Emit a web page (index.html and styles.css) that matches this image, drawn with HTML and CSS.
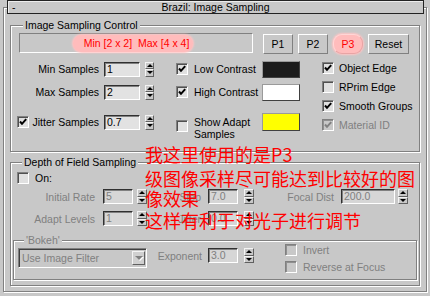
FILE: index.html
```html
<!DOCTYPE html>
<html lang="zh-CN">

<head>
  <meta charset="UTF-8">
  <title>Brazil: Image Sampling</title>
  <link rel="stylesheet" href="styles.css">
</head>

<body>
  <div class="rollout">
    <div class="rollout-title">
      <span class="minus">-</span>
      <span class="title-text">Brazil: Image Sampling</span>
    </div>

    <!-- Image Sampling Control -->
    <div class="group g-sampling">
      <div class="legend">Image Sampling Control</div>
      <div class="top-row">
        <div class="readout"><span class="mark">Min [2 x 2]&nbsp; Max [4 x 4]</span></div>
        <div class="btn b-p1">P1</div>
        <div class="btn b-p2">P2</div>
        <div class="btn b-p3 hot">P3</div>
        <div class="btn b-reset">Reset</div>
      </div>

      <div class="main">
        <div class="left">
          <div class="row">
            <div class="label">Min Samples</div>
            <div class="edit">1</div>
            <div class="spin"><span class="up"></span><span class="dn"></span></div>
            <div class="opt"><span class="cb on"><svg viewBox="0 0 10 10"><path d="M2 4.5 4 6.8 8.2 2.2" /></svg></span><span>Low Contrast</span></div>
            <div class="swatch black"></div>
          </div>
          <div class="row r2">
            <div class="label">Max Samples</div>
            <div class="edit">2</div>
            <div class="spin"><span class="up"></span><span class="dn"></span></div>
            <div class="opt"><span class="cb on"><svg viewBox="0 0 10 10"><path d="M2 4.5 4 6.8 8.2 2.2" /></svg></span><span>High Contrast</span></div>
            <div class="swatch white"></div>
          </div>
          <div class="row r3">
            <div class="label jit"><span class="cb on"><svg viewBox="0 0 10 10"><path d="M2 4.5 4 6.8 8.2 2.2" /></svg></span><span>Jitter Samples</span></div>
            <div class="edit">0.7</div>
            <div class="spin"><span class="up"></span><span class="dn"></span></div>
            <div class="opt tall"><span class="cb"></span><span class="two">Show Adapt<br>Samples</span></div>
            <div class="swatch yellow"></div>
          </div>
        </div>

        <div class="right">
          <div class="ritem"><span class="cb on"><svg viewBox="0 0 10 10"><path d="M2 4.5 4 6.8 8.2 2.2" /></svg></span><span>Object Edge</span></div>
          <div class="ritem"><span class="cb"></span><span>RPrim Edge</span></div>
          <div class="ritem"><span class="cb on"><svg viewBox="0 0 10 10"><path d="M2 4.5 4 6.8 8.2 2.2" /></svg></span><span>Smooth Groups</span></div>
          <div class="ritem off"><span class="cb on"><svg viewBox="0 0 10 10"><path d="M2 4.5 4 6.8 8.2 2.2" /></svg></span><span>Material ID</span></div>
        </div>
      </div>
    </div>

    <!-- Depth of Field Sampling -->
    <div class="group g-dof">
      <div class="legend">Depth of Field Sampling</div>
      <div class="onrow"><span class="cb"></span><span>On:</span></div>

      <div class="drow">
        <div class="dlabel">Initial Rate</div>
        <div class="edit dis w30">5</div>
        <div class="spin s4"><span class="up"></span><span class="dn"></span></div>
        <div class="dlabel l2">Step</div>
        <div class="edit dis w30 m7">7.0</div>
        <div class="spin s6"><span class="up"></span><span class="dn"></span></div>
        <div class="dlabel l3">Focal Dist</div>
        <div class="edit dis w54 m7">200.0</div>
        <div class="spin s3"><span class="up"></span><span class="dn"></span></div>
      </div>
      <div class="drow d2">
        <div class="dlabel">Adapt Levels</div>
        <div class="edit dis w30">1</div>
        <div class="spin s4"><span class="up"></span><span class="dn"></span></div>
        <div class="dlabel l2">Jitter</div>
        <div class="edit dis w30 m7">0.0</div>
        <div class="spin s6"><span class="up"></span><span class="dn"></span></div>
      </div>

      <div class="group bokeh">
        <div class="legend off">'Bokeh'</div>
        <div class="brow">
          <div class="combo"><span>Use Image Filter</span><span class="drop"></span></div>
          <div class="exp">
            <div class="dlabel l2">Exponent</div>
            <div class="edit dis w30 m6">3.0</div>
            <div class="spin s6"><span class="up"></span><span class="dn"></span></div>
          </div>
          <div class="checks">
            <div class="citem"><span class="cb"></span><span>Invert</span></div>
            <div class="citem"><span class="cb"></span><span>Reverse at Focus</span></div>
          </div>
        </div>
      </div>
    </div>
  </div>

  <div class="note">
    <div class="n1">我这里使用的是P3</div>
    <div class="n2">级图像采样尽可能达到比较好的图</div>
    <div class="n3">像效果</div>
    <div class="n4">这样有利于对光子进行调节</div>
  </div>
</body>

</html>
```

FILE: styles.css
```css
body {
  margin: 0;
  width: 430px;
  height: 296px;
  overflow: hidden;
  position: relative;
  background-color: #c8c8c8;
  color: #000;
  font-family: "Liberation Sans", Arial, sans-serif;
  font-size: 10.5px;
}

/* rollout frame + header */
.rollout {
  margin: 7px 3px 0 3px;
  padding-bottom: 5px;
  border: 1px solid #808080;
  box-shadow: inset 1px 1px 0 #fff, 1px 1px 0 #fff;
}

.rollout-title {
  margin: -8px 2px 0 3px;
  height: 14px;
  box-sizing: border-box;
  border: 1px solid #222;
  box-shadow: inset 1px 1px 0 #ececec;
  background-color: #c8c8c8;
  display: grid;
  grid-template-columns: 20px 1fr 20px;
  align-items: center;
  line-height: 12px;
}

.minus {
  padding-left: 4px;
}

.title-text {
  text-align: center;
}

/* etched group boxes */
.group {
  margin: 0 6px;
  border: 1px solid #808080;
  box-shadow: inset 1px 1px 0 #fff, 1px 1px 0 #fff;
}

.legend {
  display: table;
  margin: -14px 0 2px 6px;
  padding: 0 2px;
  line-height: 12px;
  background-color: #c8c8c8;
}

.off,
.off span {
  color: #808080;
}

.g-sampling {
  margin-top: 11px;
  padding: 7px 0 17px 6px;
}

.top-row {
  display: flex;
  align-items: flex-start;
}

.readout {
  margin-left: 2px;
  width: 234px;
  height: 20px;
  box-sizing: border-box;
  border: 1px solid;
  border-color: #808080 #fff #fff #808080;
  display: flex;
  align-items: center;
  justify-content: center;
}

.mark {
  margin-right: 6px;
  padding: 0 4px 0 11px;
  line-height: 17px;
  color: #ff0000;
  background-color: #ffbcbc;
  border-radius: 9px;
  box-shadow: 0 0 2px 1px #ffc4c4;
}

.btn {
  margin-top: 1px;
  margin-left: 5px;
  width: 30px;
  height: 20px;
  box-sizing: border-box;
  border: 1px solid;
  border-color: #fff #808080 #808080 #fff;
  display: flex;
  align-items: center;
  justify-content: center;
}

.b-p1 {
  margin-left: 10px;
}

.b-reset {
  width: 41px;
}

.hot {
  color: #ff0000;
  background-color: #ffbcbc;
  border-color: #ffd6d6 #e8a4a4 #e8a4a4 #ffd6d6;
  border-radius: 9px;
  box-shadow: 0 0 2px 1px #ffc4c4;
}

.main {
  margin-top: 4px;
  display: flex;
  align-items: flex-start;
}

.left {
  padding-top: 2px;
}

.row {
  display: flex;
  align-items: center;
  height: 18px;
}

.r2 {
  margin-top: 5px;
}

.r3 {
  margin-top: 11px;
  height: 20px;
}

.label {
  width: 82px;
  text-align: right;
}

.label.jit {
  display: flex;
  align-items: center;
  justify-content: space-between;
}

.label.jit .cb {
  margin-right: 0;
}

/* edit fields and spinners */
.edit {
  margin-left: 5px;
  width: 36px;
  height: 15px;
  box-sizing: border-box;
  padding-left: 2px;
  line-height: 13px;
  border: 1px solid;
  border-color: #303030 #fff #fff #303030;
  box-shadow: inset 1px 1px 0 #808080;
  background-color: #e2e2e2;
}

.edit.dis {
  color: #808080;
  background-color: #d6d6d6;
}

.w30 {
  width: 30px;
  margin-left: 8px;
}

.w54 {
  width: 54px;
}

.m7 {
  margin-left: 7px;
}

.m6 {
  margin-left: 6px;
}

.spin {
  margin-left: 5px;
  width: 9px;
  height: 15px;
  display: flex;
  flex-direction: column;
  background-color: #c8c8c8;
}

.spin span {
  flex: 1;
  border: 1px solid;
  border-color: #f4f4f4 #606060 #606060 #f4f4f4;
  display: flex;
  align-items: center;
  justify-content: center;
}

.spin .up::after,
.spin .dn::after {
  content: "";
  border-left: 3px solid transparent;
  border-right: 3px solid transparent;
}

.spin .up::after {
  border-bottom: 3px solid #000;
}

.spin .dn::after {
  border-top: 3px solid #000;
}

.s4 {
  margin-left: 4px;
  width: 10px;
}

.s6 {
  margin-left: 6px;
  width: 10px;
}

.s3 {
  margin-left: 3px;
  width: 10px;
}

/* checkboxes */
.cb {
  flex-shrink: 0;
  width: 12px;
  height: 12px;
  margin-right: 6px;
  box-sizing: border-box;
  border: 1px solid;
  border-color: #808080 #fff #fff #808080;
  box-shadow: inset 1px 1px 0 #505050;
  background-color: #e0e0e0;
  display: flex;
}

.cb svg {
  width: 10px;
  height: 10px;
  fill: none;
  stroke: #000;
  stroke-width: 2;
}

.off .cb,
.citem .cb {
  background-color: #c8c8c8;
  box-shadow: inset 1px 1px 0 #909090;
}

.off .cb svg {
  stroke: #808080;
}

.opt {
  margin-left: 22px;
  width: 86px;
  display: flex;
  align-items: center;
}

.opt.tall {
  align-self: flex-start;
  align-items: flex-start;
}

.opt.tall .cb {
  margin-top: 8px;
}

.two {
  margin-top: 4px;
  line-height: 12px;
}

.swatch {
  width: 38px;
  height: 17px;
  box-sizing: border-box;
  border: 1px solid;
  border-color: #9a9a9a #404040 #404040 #9a9a9a;
}

.black {
  background-color: #1c1c1c;
}

.white {
  background-color: #fff;
}

.yellow {
  height: 18px;
  background-color: #ffff00;
}

.right {
  margin-left: 22px;
}

.ritem {
  height: 19px;
  display: flex;
  align-items: center;
}

.ritem .cb {
  margin-right: 5px;
}

/* depth of field */
.g-dof {
  margin-top: 10px;
  padding: 9px 0 5px 6px;
}

.g-dof > .legend {
  margin: -16px 0 4px 5px;
}

.onrow {
  display: flex;
  align-items: center;
  height: 12px;
}

.drow {
  margin-top: 5px;
  display: flex;
  align-items: center;
  height: 15px;
}

.drow.d2 {
  margin-top: 7px;
}

.dlabel {
  width: 78px;
  text-align: right;
  color: #808080;
}

.dlabel.l2 {
  width: 54px;
}

.dlabel.l3 {
  width: 80px;
}

.bokeh {
  margin: 14px 2px 0 -4px;
  padding: 7px 0 4px 4px;
}

.brow {
  display: flex;
  align-items: flex-start;
}

.combo {
  width: 129px;
  height: 20px;
  box-sizing: border-box;
  padding: 0 1px 0 3px;
  border: 1px solid;
  border-color: #808080 #fff #fff #808080;
  box-shadow: inset 1px 1px 0 #404040;
  display: flex;
  align-items: center;
  justify-content: space-between;
  color: #808080;
}

.drop {
  width: 13px;
  height: 14px;
  box-sizing: border-box;
  border: 1px solid;
  border-color: #f4f4f4 #606060 #606060 #f4f4f4;
  background-color: #d0d0d0;
  display: flex;
  align-items: center;
  justify-content: center;
}

.drop::after {
  content: "";
  border-left: 4px solid transparent;
  border-right: 4px solid transparent;
  border-top: 4px solid #808080;
  filter: drop-shadow(1px 1px 0 #fff);
}

.exp {
  display: flex;
  align-items: center;
  height: 15px;
}

.exp .dlabel.l2 {
  width: 55px;
}

.checks {
  margin-left: 31px;
  margin-top: -7px;
}

.citem {
  height: 17px;
  display: flex;
  align-items: center;
  color: #808080;
}

/* red hand-written note over the panel */
.note {
  position: absolute;
  left: 145px;
  top: 143px;
  color: #ff0000;
  font-family: "Noto Sans CJK SC", sans-serif;
  font-size: 18px;
  white-space: nowrap;
}

.n1 {
  line-height: 22px;
}

.n2 {
  line-height: 26px;
}

.n3 {
  line-height: 14px;
}

.n4 {
  line-height: 30px;
}
```
